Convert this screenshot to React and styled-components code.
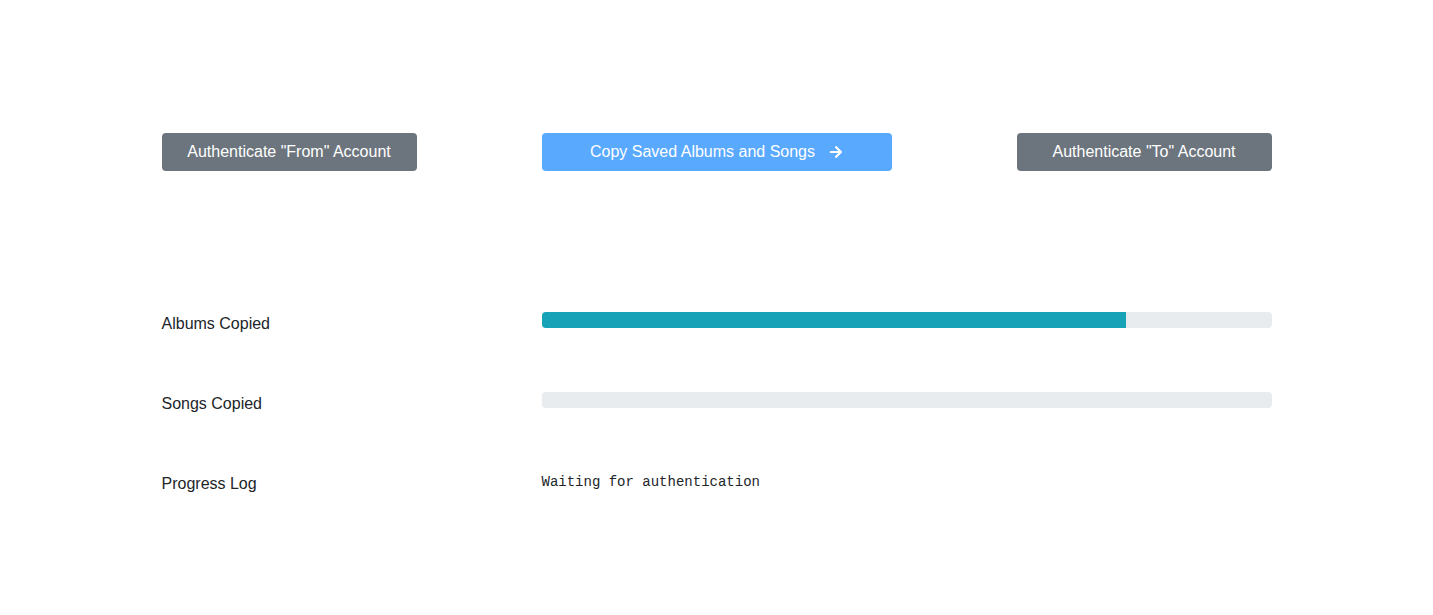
import React from "react";
import styled, { createGlobalStyle, css } from "styled-components";
import { FaArrowRight } from "react-icons/fa";

const GlobalStyle = createGlobalStyle`
	body {
		margin: 0;
		background: #fff;
		color: #212529;
		font-family: "Liberation Sans", Arial, sans-serif;
		font-size: 16px;
		line-height: 1.5;
	}
`;

const Container = styled.div`
	max-width: 1140px;
	margin: 0 auto;
	padding: 133px 15px 0;
	box-sizing: border-box;
`;

const ButtonRow = styled.div`
	display: grid;
	grid-template-columns: repeat(3, 1fr);
	column-gap: 30px;
	align-items: center;
	margin-bottom: 140px;
`;

const Button = styled.button`
	height: 38px;
	padding: 0 12px;
	border: 1px solid transparent;
	border-radius: 4px;
	font-family: inherit;
	font-size: 16px;
	line-height: 1.5;
	color: #fff;
	display: inline-flex;
	align-items: center;
	justify-content: center;
	gap: 14px;
	cursor: pointer;
	${({ $variant }) =>
		$variant === "primary"
			? css`
					background: #59a9ff;
					width: 100%;
			  `
			: css`
					background: #6c757d;
					width: 255px;
			  `}
	justify-self: ${({ $align }) => $align || "stretch"};
`;

const StatRow = styled.div`
	display: grid;
	grid-template-columns: 350px 1fr;
	column-gap: 30px;
	height: 24px;
	margin-bottom: 56px;
`;

const Label = styled.div`
	padding-top: 1px;
	font-size: 16px;
	line-height: 24px;
`;

const Track = styled.div`
	height: 16px;
	margin-top: 1px;
	background: #e9ecef;
	border-radius: 4px;
	overflow: hidden;
	display: flex;
`;

const Fill = styled.div`
	background: #17a2b8;
	height: 100%;
`;

const Log = styled.pre`
	margin: 0;
	padding-top: 1px;
	font-family: "Liberation Mono", "Courier New", monospace;
	font-size: 14px;
	line-height: 21px;
	color: #212529;
`;

const stats = [
	{ label: "Albums Copied", value: 80 },
	{ label: "Songs Copied", value: 0 },
];

export default function App() {
	return (
		<>
			<GlobalStyle />
			<Container>
				<ButtonRow>
					<Button $align="start">Authenticate "From" Account</Button>
					<Button $variant="primary">
						Copy Saved Albums and Songs <FaArrowRight size={14} />
					</Button>
					<Button $align="end">Authenticate "To" Account</Button>
				</ButtonRow>
				{stats.map((s) => (
					<StatRow key={s.label}>
						<Label>{s.label}</Label>
						<Track>
							<Fill style={{ width: `${s.value}%` }} />
						</Track>
					</StatRow>
				))}
				<StatRow>
					<Label>Progress Log</Label>
					<Log>Waiting for authentication</Log>
				</StatRow>
			</Container>
		</>
	);
}
